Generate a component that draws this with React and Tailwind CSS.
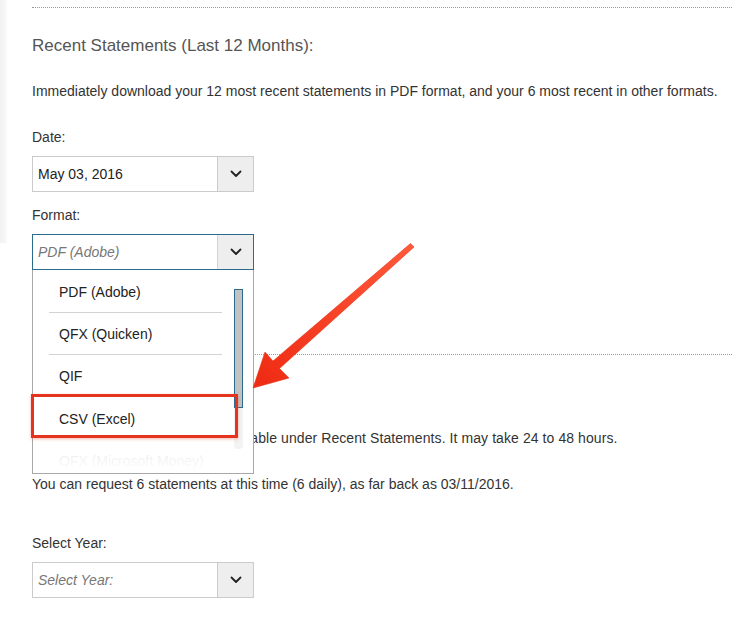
import React from 'react';

const font = { fontFamily: '"Liberation Sans", Arial, sans-serif' };

function Chevron() {
  return (
    <svg width="12" height="8" viewBox="0 0 12 8" fill="none">
      <path d="M1.5 1.5 L6 6 L10.5 1.5" stroke="#222" strokeWidth="1.8" strokeLinecap="round" strokeLinejoin="round" />
    </svg>
  );
}

function Select({ value, placeholder, active }) {
  return (
    <div className={`flex h-9 w-[222px] border bg-white ${active ? 'border-[#2b6c8c]' : 'border-[#cbcbcb]'}`}>
      <div className={`flex flex-1 items-center pl-[5px] text-[14px] ${placeholder ? 'italic text-[#777]' : 'text-[#222]'}`}>
        {value}
      </div>
      <div className={`flex w-[36px] items-center justify-center border-l bg-[#eeeeee] ${active ? 'border-[#d4d4d4]' : 'border-[#cbcbcb]'}`}>
        <Chevron />
      </div>
    </div>
  );
}

const options = ['PDF (Adobe)', 'QFX (Quicken)', 'QIF', 'CSV (Excel)', 'OFX (Microsoft Money)'];

export default function App() {
  return (
    <div className="relative h-[617px] w-[753px] overflow-hidden bg-white text-[#333]" style={font}>
      <div className="absolute left-0 top-0 h-[243px] w-[7px] bg-gradient-to-r from-[#f1f1f1] to-[#fafafa]" />

      <div className="pt-[7px]">
        <div className="ml-8 mr-[21px] border-t border-dotted border-[#9a9a9a]" />
        <div className="pl-8">
          <h2 className="mt-[28px] text-[17px] leading-5 text-[#555]">Recent Statements (Last 12 Months):</h2>
          <p className="mt-[25px] text-[14px] leading-5 text-[#333]">
            Immediately download your 12 most recent statements in PDF format, and your 6 most recent in other formats.
          </p>
          <div className="mt-[26px] text-[14px] leading-5">Date:</div>
          <div className="mt-[9px]"><Select value="May 03, 2016" /></div>
          <div className="mt-[13px] text-[14px] leading-5">Format:</div>
          <div className="mt-[9px]"><Select value="PDF (Adobe)" placeholder active /></div>
        </div>
        <div className="ml-8 mr-[21px] mt-[84px] border-t border-dotted border-[#9a9a9a]" />
        <div className="pl-8">
          <p className="mt-[73px] text-[14px] leading-5 tracking-[0.08px]">
            Requested statements will be available under Recent Statements. It may take 24 to 48 hours.
          </p>
          <p className="mt-[26px] text-[14px] leading-5">
            You can request 6 statements at this time (6 daily), as far back as 03/11/2016.
          </p>
          <div className="mt-[39px] text-[14px] leading-5">Select Year:</div>
          <div className="mt-[9px]"><Select value="Select Year:" placeholder /></div>
        </div>
      </div>

      {/* open dropdown list */}
      <div className="absolute left-8 top-[270px] h-[204px] w-[222px] overflow-hidden border border-t-0 border-[#a8a8a8] bg-white">
        <div className="pr-[31px] pt-px">
          {options.map((o, i) => (
            <div key={o} className={`ml-4 flex h-[42px] items-center pl-[10px] pt-[2px] text-[14px] text-[#222] ${i < 3 ? 'border-b border-[#d2d2d2]' : ''}`}>
              {o}
            </div>
          ))}
        </div>
        <div className="absolute bottom-0 left-0 right-0 h-[38px] bg-gradient-to-b from-white/85 to-white" />
        <div className="absolute right-[10px] top-[19px] h-[160px] w-[9px] rounded-[4px] bg-[#f3f3f3]" />
        <div className="absolute right-[10px] top-[19px] h-[119px] w-[9px] border border-[#2b6c8c] bg-[#c2c2c2]" />
      </div>

      {/* annotation box */}
      <div className="absolute left-[31px] top-[394px] h-[44px] w-[207px] border-[3px] border-[#e5341d] shadow-[0_1px_3px_rgba(229,52,29,0.35)]" />

      {/* annotation arrow */}
      <svg className="absolute left-0 top-0" width="753" height="617" viewBox="0 0 753 617">
        <defs>
          <linearGradient id="ar" x1="412" y1="245" x2="253" y2="388" gradientUnits="userSpaceOnUse">
            <stop offset="0" stopColor="#ff5a3a" />
            <stop offset="1" stopColor="#ee2a12" />
          </linearGradient>
        </defs>
        <polygon
          points="253,388 265,352 273,361 410.5,243.5 414,247 279.5,368.5 289,378"
          fill="url(#ar)"
          stroke="#e8321a"
          strokeWidth="0.6"
          strokeLinejoin="round"
        />
      </svg>
    </div>
  );
}
